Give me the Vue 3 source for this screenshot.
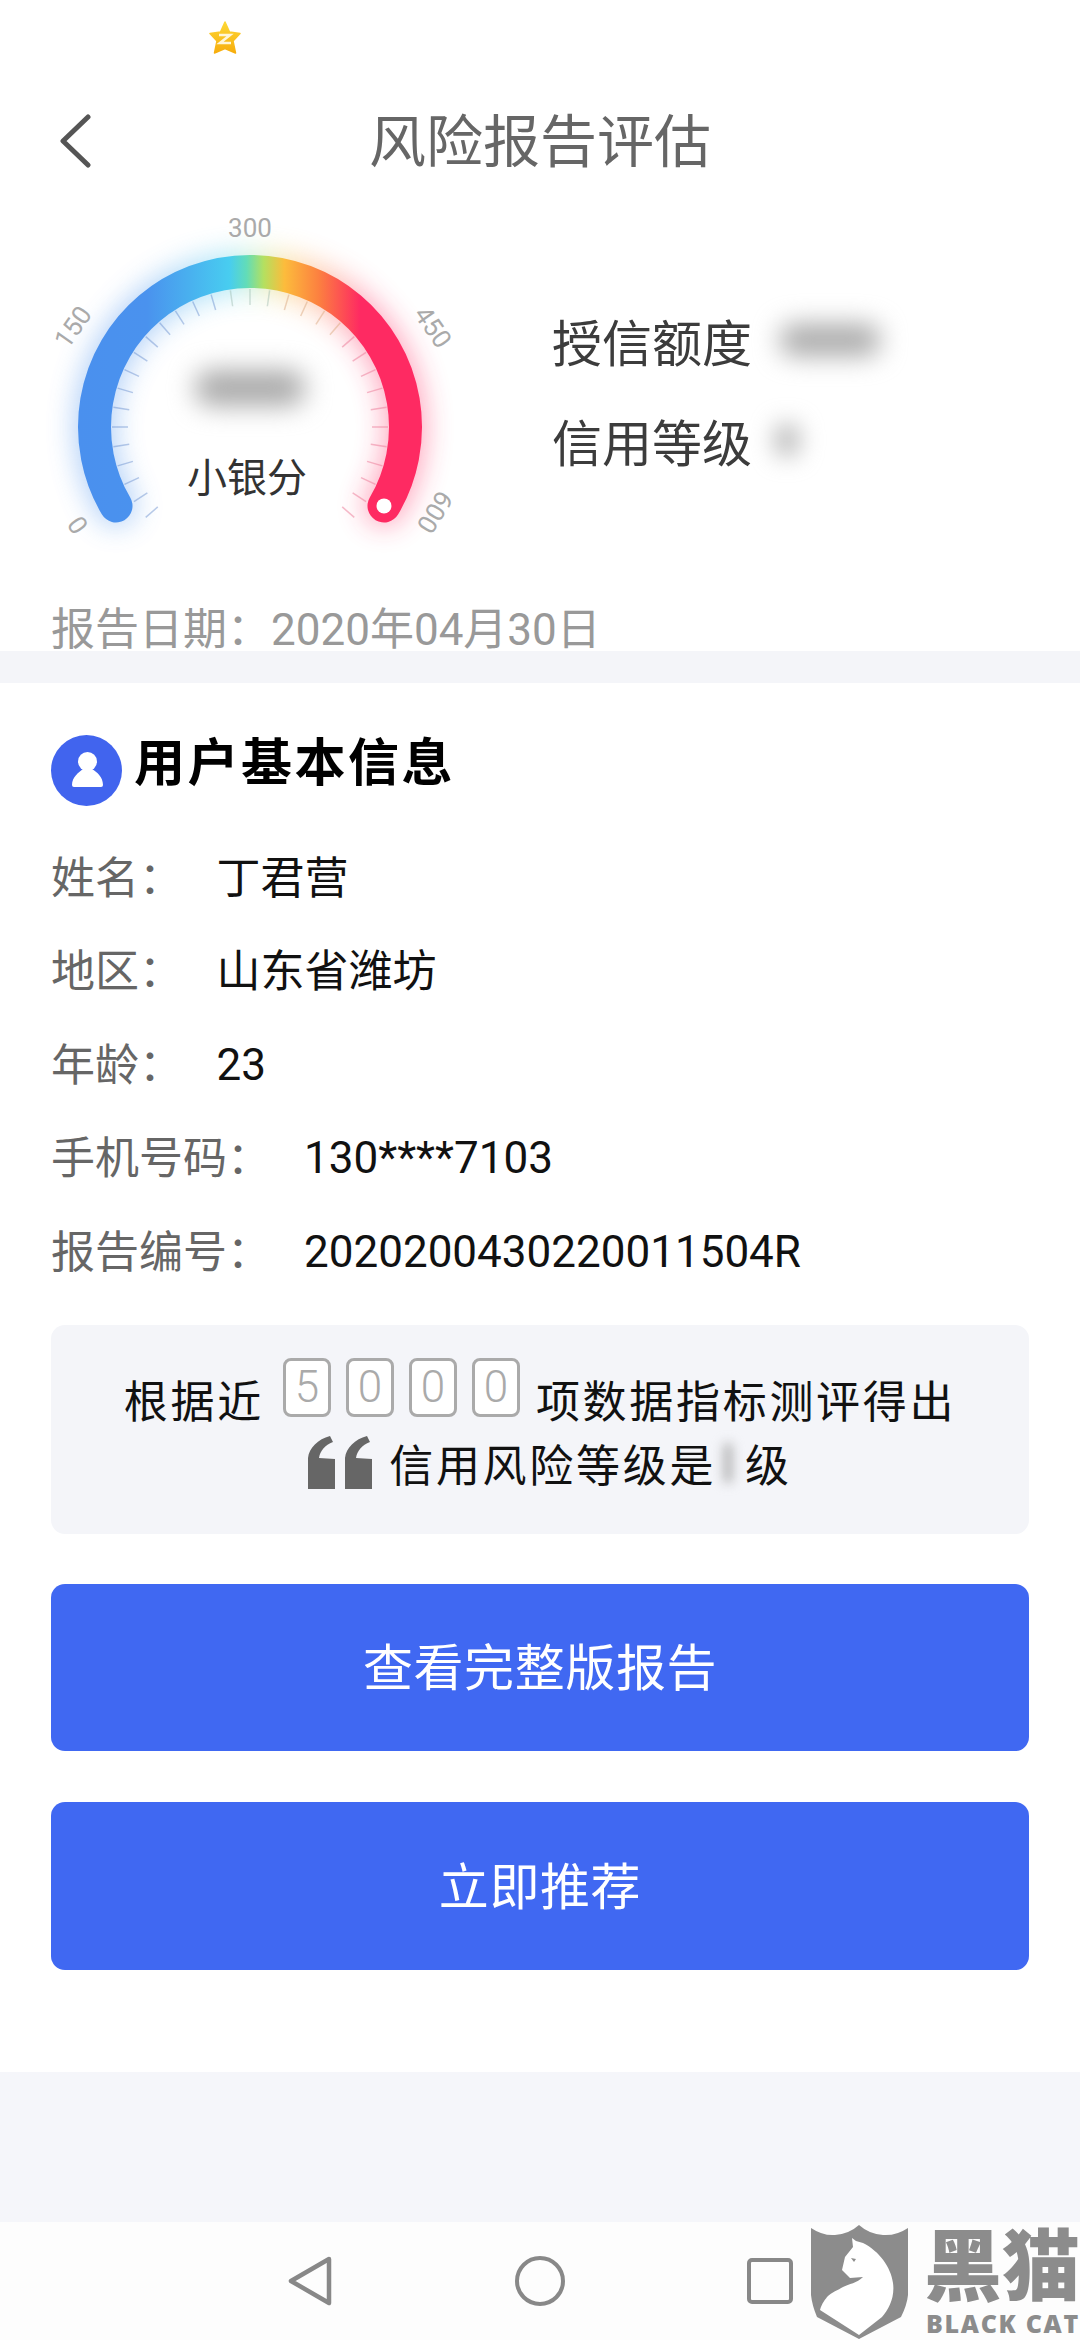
<template>
  <div class="page">
    <div class="status-bar">
      <svg class="star" viewBox="0 0 32 33" width="32" height="33">
        <defs>
          <linearGradient id="starGrad" x1="0" y1="0" x2="0" y2="1">
            <stop offset="0" stop-color="#fdd835" />
            <stop offset="1" stop-color="#f7ad0c" />
          </linearGradient>
        </defs>
        <path d="M16 1 L20.5 11 L31 12.5 L24 20 L26.5 32 L16 27.5 L5.5 32 L8 20 L1 12.5 L11.5 11 Z" fill="url(#starGrad)" stroke="url(#starGrad)" stroke-width="1.5" stroke-linejoin="round" />
        <path d="M10 14 H21 L11 22 H22" fill="none" stroke="#fff6d8" stroke-width="2.6" />
      </svg>
    </div>

    <header class="nav">
      <svg class="back" viewBox="0 0 32 54" width="32" height="54">
        <path d="M29 3 L4 27 L29 51" fill="none" stroke="#555" stroke-width="5" stroke-linecap="round" stroke-linejoin="round" />
      </svg>
      <h1 class="nav-title">风险报告评估</h1>
    </header>

    <section class="summary">
      <div class="gauge">
        <svg viewBox="0 0 500 400" width="500" height="400">
          <defs>
            <linearGradient id="arcGrad" gradientUnits="userSpaceOnUse" x1="78" y1="0" x2="422" y2="0">
              <stop offset="0" stop-color="#4a90ee" />
              <stop offset="0.2" stop-color="#4a92ee" />
              <stop offset="0.44" stop-color="#48cdf0" />
              <stop offset="0.49" stop-color="#62dcb8" />
              <stop offset="0.54" stop-color="#b4e060" />
              <stop offset="0.6" stop-color="#fcbc3c" />
              <stop offset="0.7" stop-color="#fc8040" />
              <stop offset="0.82" stop-color="#fe2a62" />
              <stop offset="1" stop-color="#fe2a62" />
            </linearGradient>
            <filter id="arcGlow" x="-30%" y="-30%" width="160%" height="160%">
              <feGaussianBlur stdDeviation="14" />
            </filter>
          </defs>
          <path :d="arcPath" fill="none" stroke="url(#arcGrad)" stroke-width="40" stroke-linecap="round" filter="url(#arcGlow)" opacity="0.42" />
          <line
            v-for="t in ticks"
            :key="t.id"
            :x1="t.x1"
            :y1="t.y1"
            :x2="t.x2"
            :y2="t.y2"
            :stroke="t.color"
            stroke-width="1.5"
          />
          <path :d="arcPath" fill="none" stroke="url(#arcGrad)" stroke-width="33" stroke-linecap="round" />
          <circle :cx="endDot.x" :cy="endDot.y" r="7.5" fill="#fff" />
          <text
            v-for="l in scaleLabels"
            :key="l.text"
            class="scale-label"
            text-anchor="middle"
            dominant-baseline="central"
            :transform="`translate(${l.x} ${l.y}) rotate(${l.rot})`"
          >{{ l.text }}</text>
        </svg>
        <div class="score-blur"></div>
        <div class="score-name">小银分</div>
      </div>

      <div class="credit">
        <div class="credit-row">
          <span>授信额度</span>
          <i class="blur blur-wide"></i>
        </div>
        <div class="credit-row">
          <span>信用等级</span>
          <i class="blur blur-small"></i>
        </div>
      </div>
    </section>

    <div class="report-date">报告日期：2020年04月30日</div>
    <div class="divider"></div>

    <section class="info">
      <div class="info-head">
        <svg class="user-icon" viewBox="0 0 71 71" width="71" height="71">
          <circle cx="35.5" cy="35.5" r="35.5" fill="#4164ee" />
          <circle cx="36.5" cy="26.5" r="9.5" fill="#fff" />
          <path d="M21 50 C21 42 28 37 32 34 L41 34 C46 37 52 42 52 50 Q52 52 50 52 L23 52 Q21 52 21 50 Z" fill="#fff" />
        </svg>
        <h2 class="info-title">用户基本信息</h2>
      </div>
      <div v-for="row in rows" :key="row.label" class="info-row">
        <span class="info-label" :class="{ long: row.label.length > 3 }">{{ row.label }}</span>
        <span class="info-value" :class="{ latin: row.latin }">{{ row.value }}</span>
      </div>

      <div class="note">
        <div class="note-line first">
          <span>根据近</span>
          <span class="digits">
            <b v-for="(d, i) in digits" :key="i" class="digit">{{ d }}</b>
          </span>
          <span>项数据指标测评得出</span>
        </div>
        <div class="note-line second">
          <svg class="quote" viewBox="0 0 64 54" width="64" height="54">
            <path d="M0 53 V22 C1 12 10 3 22 0 L25 6 C17 9 12 15 11 22 L27 23 V53 Z M37 53 V22 C38 12 47 3 59 0 L62 6 C54 9 49 15 48 22 L64 23 V53 Z" fill="#666" />
          </svg>
          <span class="level-text">信用风险等级是</span>
          <i class="blur blur-level"></i>
          <span>级</span>
        </div>
      </div>

      <button class="primary">查看完整版报告</button>
      <button class="primary second-btn">立即推荐</button>
    </section>

    <div class="filler"></div>

    <footer class="sys-nav">
      <svg viewBox="0 0 44 50" width="44" height="50"><path d="M41 3 L3 25 L41 47 Z" fill="none" stroke="#888" stroke-width="4.5" stroke-linejoin="round" /></svg>
      <svg viewBox="0 0 50 50" width="50" height="50"><circle cx="25" cy="25" r="23" fill="none" stroke="#888" stroke-width="4" /></svg>
      <svg viewBox="0 0 46 46" width="46" height="46"><rect x="2" y="2" width="42" height="42" rx="3" fill="none" stroke="#888" stroke-width="4" /></svg>
    </footer>

    <div class="watermark">
      <svg viewBox="0 0 97 114" width="97" height="114">
        <path d="M0 3 Q12 11 24 10 Q38 9 48 0 Q58 9 72 10 Q85 11 97 3 V70 Q96 80 90 92 L48 114 L6 92 Q1 80 0 70 Z" fill="#8c8c8c" />
        <path d="M41 13 L45 16 L52 18 C68 26 80 42 82 58 C84 72 78 84 71 92 L48 110 L9 85 C11 78 14 75 16 72 C21 67 27 65 32 62 C38 59 46 58 52 52 L39 53 L31 45 L34 32 L42 22 Z" fill="#fff" />
        <path d="M40 33 L45 34 L43 37 Z" fill="#8c8c8c" />
      </svg>
      <div class="mark-text">
        <div class="mark-cn">黑猫</div>
        <div class="mark-en">BLACK CAT</div>
      </div>
    </div>
  </div>
</template>

<script setup>
const cx = 250
const cy = 227
const r = 155.5
const step = 90 / 11

// angle is measured from the top of the gauge, clockwise
const pt = (deg, radius) => {
  const a = (deg * Math.PI) / 180
  return {
    x: +(cx + radius * Math.sin(a)).toFixed(2),
    y: +(cy - radius * Math.cos(a)).toFixed(2),
  }
}

const startAngle = -120.5
const endAngle = 120.5
const s = pt(startAngle, r)
const e = pt(endAngle, r)
const arcPath = `M${s.x} ${s.y} A${r} ${r} 0 1 1 ${e.x} ${e.y}`
const endDot = e

const tickColor = (i) => {
  if (i < -1) return "rgba(90,130,200,.42)"
  if (i < 2) return "rgba(150,180,170,.42)"
  if (i < 6) return "rgba(220,170,130,.5)"
  return "rgba(235,120,150,.5)"
}

const ticks = []
for (let i = -16; i <= 16; i++) {
  const a = pt(i * step, 138)
  const b = pt(i * step, 122)
  ticks.push({ id: i, x1: a.x, y1: a.y, x2: b.x, y2: b.y, color: tickColor(i) })
}

const scaleLabels = [
  { text: "0", x: 78, y: 325, rot: -125 },
  { text: "150", x: 73, y: 127, rot: -55 },
  { text: "300", x: 250, y: 28, rot: 0 },
  { text: "450", x: 433, y: 127, rot: 55 },
  { text: "600", x: 435, y: 312, rot: 122 },
]

const rows = [
  { label: "姓名：", value: "丁君营" },
  { label: "地区：", value: "山东省潍坊" },
  { label: "年龄：", value: "23", latin: true },
  { label: "手机号码：", value: "130****7103", latin: true },
  { label: "报告编号：", value: "2020200430220011504R", latin: true },
]

const digits = ["5", "0", "0", "0"]
</script>

<style>
html,
body {
  margin: 0;
  background: #fff;
}
</style>

<style scoped>
.page {
  position: relative;
  width: 1080px;
  height: 2340px;
  overflow: hidden;
  background: #fff;
  font-family: Roboto, "Noto Sans CJK SC", sans-serif;
  display: flex;
  flex-direction: column;
}

.status-bar {
  height: 84px;
  box-sizing: border-box;
  padding: 21px 0 0 209px;
}

.star {
  display: block;
}

.nav {
  position: relative;
  height: 114px;
  display: flex;
  align-items: center;
  justify-content: center;
}

.back {
  position: absolute;
  left: 59px;
  top: 30px;
}

.nav-title {
  margin: 0 0 8px;
  font-size: 57px;
  font-weight: 400;
  color: #666;
}

.summary {
  display: flex;
  height: 405px;
  margin-top: 2px;
}

.gauge {
  position: relative;
  width: 500px;
  height: 400px;
  flex: none;
}

.gauge svg {
  display: block;
  overflow: visible;
}

.scale-label {
  font-family: Roboto, sans-serif;
  font-size: 26px;
  fill: #aaa;
}

.score-blur {
  position: absolute;
  left: 195px;
  top: 170px;
  width: 110px;
  height: 36px;
  background: #aaa;
  border-radius: 16px;
  filter: blur(13px);
}

.score-name {
  position: absolute;
  left: 0;
  width: 494px;
  top: 251px;
  text-align: center;
  font-size: 40px;
  line-height: 56px;
  color: #333;
}

.credit {
  padding: 90px 0 0 52px;
  font-size: 50px;
  color: #3c3c3c;
}

.credit-row {
  display: flex;
  align-items: center;
  height: 100px;
}

.blur {
  display: block;
  background: #aaa;
  border-radius: 14px;
}

.blur-wide {
  width: 100px;
  height: 32px;
  margin-left: 28px;
  filter: blur(13px);
}

.blur-small {
  width: 22px;
  height: 32px;
  margin-left: 24px;
  filter: blur(12px);
}

.report-date {
  height: 46px;
  padding-left: 51px;
  font-size: 44px;
  line-height: 50px;
  color: #999;
}

/* the band covers the foot of the date line, as in the app */
.divider {
  position: relative;
  height: 32px;
  background: #f4f5f9;
}

.info {
  padding: 0 51px;
}

.info-head {
  display: flex;
  align-items: center;
  gap: 12px;
  padding-top: 52px;
  height: 71px;
  margin-bottom: 22px;
}

.user-icon {
  flex: none;
}

.info-title {
  margin: 0 0 24px;
  font-size: 51px;
  font-weight: 700;
  letter-spacing: 2.5px;
  color: #000;
}

.info-row {
  display: flex;
  align-items: center;
  height: 93.5px;
  font-size: 44px;
}

.info-label {
  width: 165.5px;
  color: #666;
}

.info-label.long {
  width: 253px;
}

.info-value {
  color: #111;
}

.info-value.latin {
  padding-top: 6px;
}

.note {
  box-sizing: border-box;
  height: 209px;
  margin-top: 29px;
  padding-top: 33px;
  background: #f4f5f9;
  border-radius: 14px;
  font-size: 44px;
  color: #111;
  letter-spacing: 2.7px;
}

.note-line {
  display: flex;
  justify-content: center;
  align-items: center;
}

.note-line.first {
  height: 59px;
  gap: 19px;
}

.note-line.first > span:not(.digits) {
  padding-top: 24px;
}

.digits {
  display: flex;
  gap: 15px;
  margin-right: -3px;
}

.digit {
  box-sizing: border-box;
  width: 48px;
  height: 59px;
  border: 3px solid #aaa;
  border-radius: 8px;
  background: #fff;
  color: #aaa;
  font-weight: 300;
  font-size: 44px;
  line-height: 53px;
  text-align: center;
  letter-spacing: 0;
}

.note-line.second {
  height: 56px;
  margin-top: 18px;
  padding-left: 20px;
}

.level-text {
  margin-left: 17px;
}

.blur-level {
  width: 8px;
  height: 40px;
  background: #aaa;
  filter: blur(6px);
  margin: 0 13px 0 8px;
}

.primary {
  display: block;
  width: 100%;
  height: 167px;
  margin-top: 50px;
  padding: 0 0 6px;
  border: 0;
  border-radius: 14px;
  background: #4068f2;
  color: #fff;
  font-family: inherit;
  font-size: 50px;
  letter-spacing: 0.6px;
}

.second-btn {
  height: 168px;
  margin-top: 51px;
}

.filler {
  flex: 1;
  margin-top: 102px;
  background: #f5f6fa;
}

.sys-nav {
  height: 118px;
  flex: none;
  background: #fdfdfd;
  display: grid;
  grid-template-columns: repeat(3, 230px);
  justify-content: center;
  justify-items: center;
  align-items: center;
}

.watermark {
  position: absolute;
  left: 811px;
  top: 2225px;
  display: flex;
  gap: 16px;
}

.mark-text {
  color: #8c8c8c;
  line-height: 1;
}

.mark-cn {
  font-size: 78px;
  height: 86px;
  line-height: 88px;
  font-weight: 900;
}

.mark-en {
  font-family: "Open Sans", sans-serif;
  font-size: 25px;
  line-height: 24px;
  font-weight: 800;
  letter-spacing: 1.7px;
  white-space: nowrap;
  padding-left: 2px;
}
</style>
